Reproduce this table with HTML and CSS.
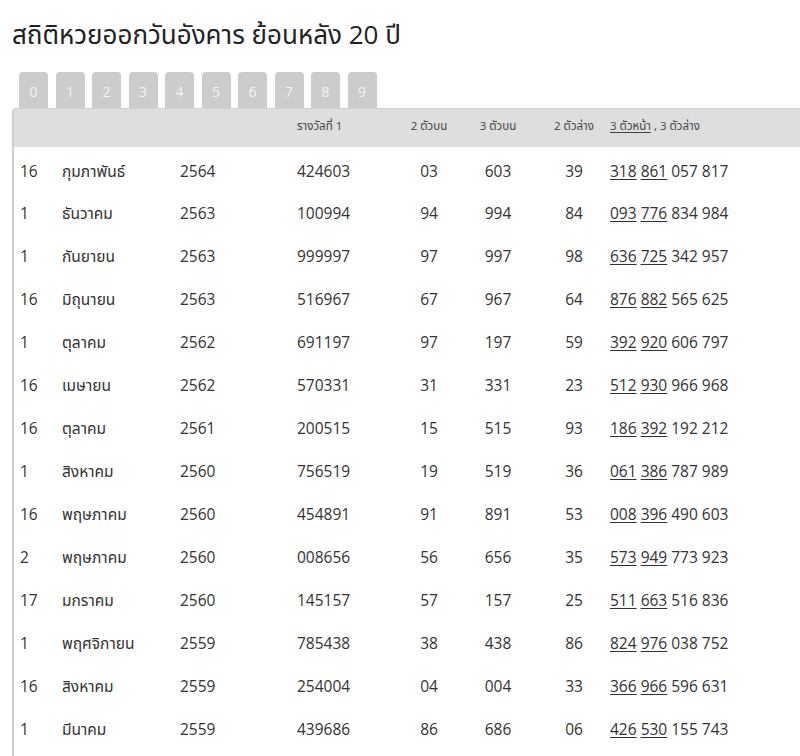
FILE: index.html
```html
<!DOCTYPE html>
<html lang="th">
<head>
<meta charset="utf-8">
<title>สถิติหวยออกวันอังคาร</title>
<link rel="stylesheet" href="styles.css">
</head>
<body>
<h1 class="title">สถิติหวยออกวันอังคาร ย้อนหลัง 20 ปี</h1>
<div class="tabs">
  <span class="tab">0</span><span class="tab">1</span><span class="tab">2</span><span class="tab">3</span><span class="tab">4</span><span class="tab">5</span><span class="tab">6</span><span class="tab">7</span><span class="tab">8</span><span class="tab">9</span>
</div>
<div class="panel">
<table class="stats">
  <colgroup>
    <col class="c-day"><col class="c-month"><col class="c-year"><col class="c-prize"><col class="c-2top"><col class="c-3top"><col class="c-2low"><col class="c-3">
  </colgroup>
  <thead>
    <tr><th></th><th></th><th></th><th class="l">รางวัลที่ 1</th><th>2 ตัวบน</th><th>3 ตัวบน</th><th>2 ตัวล่าง</th><th class="l"><u>3 ตัวหน้า</u> , 3 ตัวล่าง</th></tr>
  </thead>
  <tbody>
    <tr><td>16</td><td>กุมภาพันธ์</td><td>2564</td><td>424603</td><td class="c">03</td><td class="c">603</td><td class="c">39</td><td><u>318</u> <u>861</u> 057 817</td></tr>
    <tr><td>1</td><td>ธันวาคม</td><td>2563</td><td>100994</td><td class="c">94</td><td class="c">994</td><td class="c">84</td><td><u>093</u> <u>776</u> 834 984</td></tr>
    <tr><td>1</td><td>กันยายน</td><td>2563</td><td>999997</td><td class="c">97</td><td class="c">997</td><td class="c">98</td><td><u>636</u> <u>725</u> 342 957</td></tr>
    <tr><td>16</td><td>มิถุนายน</td><td>2563</td><td>516967</td><td class="c">67</td><td class="c">967</td><td class="c">64</td><td><u>876</u> <u>882</u> 565 625</td></tr>
    <tr><td>1</td><td>ตุลาคม</td><td>2562</td><td>691197</td><td class="c">97</td><td class="c">197</td><td class="c">59</td><td><u>392</u> <u>920</u> 606 797</td></tr>
    <tr><td>16</td><td>เมษายน</td><td>2562</td><td>570331</td><td class="c">31</td><td class="c">331</td><td class="c">23</td><td><u>512</u> <u>930</u> 966 968</td></tr>
    <tr><td>16</td><td>ตุลาคม</td><td>2561</td><td>200515</td><td class="c">15</td><td class="c">515</td><td class="c">93</td><td><u>186</u> <u>392</u> 192 212</td></tr>
    <tr><td>1</td><td>สิงหาคม</td><td>2560</td><td>756519</td><td class="c">19</td><td class="c">519</td><td class="c">36</td><td><u>061</u> <u>386</u> 787 989</td></tr>
    <tr><td>16</td><td>พฤษภาคม</td><td>2560</td><td>454891</td><td class="c">91</td><td class="c">891</td><td class="c">53</td><td><u>008</u> <u>396</u> 490 603</td></tr>
    <tr><td>2</td><td>พฤษภาคม</td><td>2560</td><td>008656</td><td class="c">56</td><td class="c">656</td><td class="c">35</td><td><u>573</u> <u>949</u> 773 923</td></tr>
    <tr><td>17</td><td>มกราคม</td><td>2560</td><td>145157</td><td class="c">57</td><td class="c">157</td><td class="c">25</td><td><u>511</u> <u>663</u> 516 836</td></tr>
    <tr><td>1</td><td>พฤศจิกายน</td><td>2559</td><td>785438</td><td class="c">38</td><td class="c">438</td><td class="c">86</td><td><u>824</u> <u>976</u> 038 752</td></tr>
    <tr><td>16</td><td>สิงหาคม</td><td>2559</td><td>254004</td><td class="c">04</td><td class="c">004</td><td class="c">33</td><td><u>366</u> <u>966</u> 596 631</td></tr>
    <tr><td>1</td><td>มีนาคม</td><td>2559</td><td>439686</td><td class="c">86</td><td class="c">686</td><td class="c">06</td><td><u>426</u> <u>530</u> 155 743</td></tr>
  </tbody>
</table>
</div>
</body>
</html>
```

FILE: styles.css
```css
html, body {
  margin: 0;
  padding: 0;
  background: #fff;
  overflow: hidden;
}
body {
  font-family: "Open Sans", "Noto Sans Thai", "Noto Sans", sans-serif;
  color: #333;
  width: 800px;
  height: 756px;
}
.title {
  margin: 0;
  padding: 16px 0 0 12px;
  height: 58px;
  box-sizing: border-box;
  font-size: 26px;
  font-weight: normal;
  line-height: 36px;
  color: #222;
}
.tabs {
  display: flex;
  gap: 7.5px;
  padding-left: 19px;
  height: 36px;
  margin-top: 14px;
}
.tab {
  width: 29px;
  height: 36px;
  background: #cccccc;
  border-radius: 4px 4px 0 0;
  color: #f4f4f4;
  font-size: 14px;
  line-height: 40px;
  text-align: center;
}
.panel {
  margin-left: 12px;
  width: 830px;
  border-left: 2px solid #cfcfcf;
  border-top: 1px solid #cfcfcf;
  border-top-left-radius: 4px;
  height: 700px;
}
.stats {
  border-collapse: collapse;
  table-layout: fixed;
  width: 100%;
}
.c-day { width: 42px; }
.c-month { width: 118px; }
.c-year { width: 117px; }
.c-prize { width: 109px; }
.c-2top { width: 58px; }
.c-3top { width: 80px; }
.c-2low { width: 72px; }
thead tr {
  background: #dedede;
  height: 38px;
}
th {
  font-weight: normal;
  font-size: 11.5px;
  line-height: 18px;
  color: #444;
  text-align: center;
  padding: 0 0 4px;
  white-space: nowrap;
}
th.l { text-align: left; padding-left: 6px; }
th:last-child { padding-left: 0; }
tbody tr { height: 43px; }
td {
  font-size: 15.5px;
  line-height: 20px;
  color: #333;
  padding: 13px 0 0 6px;
  vertical-align: baseline;
  white-space: nowrap;
}
tbody tr:first-child td { padding-top: 14px; }
td.c { text-align: center; padding-left: 0; }
td:last-child { padding-left: 0; }
u { text-underline-offset: 2px; }
```
